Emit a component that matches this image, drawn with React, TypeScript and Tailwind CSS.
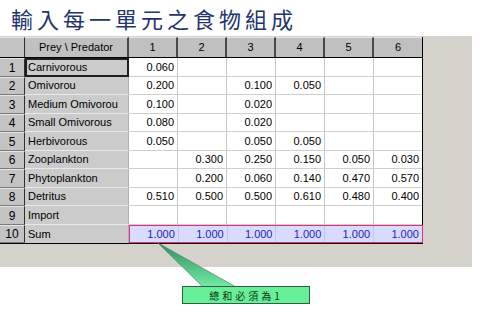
import React from "react";

const names = [
  "Carnivorous",
  "Omivorou",
  "Medium Omivorou",
  "Small Omivorous",
  "Herbivorous",
  "Zooplankton",
  "Phytoplankton",
  "Detritus",
  "Import",
];

const data: string[][] = [
  ["0.060", "", "", "", "", ""],
  ["0.200", "", "0.100", "0.050", "", ""],
  ["0.100", "", "0.020", "", "", ""],
  ["0.080", "", "0.020", "", "", ""],
  ["0.050", "", "0.050", "0.050", "", ""],
  ["", "0.300", "0.250", "0.150", "0.050", "0.030"],
  ["", "0.200", "0.060", "0.140", "0.470", "0.570"],
  ["0.510", "0.500", "0.500", "0.610", "0.480", "0.400"],
  ["", "", "", "", "", ""],
];

const font = { fontFamily: '"Liberation Sans", Arial, sans-serif' };

function RowNum({ n, h }: { n: number; h: string }) {
  return (
    <div
      className={`${h} w-[25px] shrink-0 flex items-center justify-center bg-[#c3c3c3] border-t border-t-[#e6e6e6] border-b border-b-[#7a7a7a] border-r border-r-[#303030] text-[12px] text-black`}
    >
      {n}
    </div>
  );
}

export default function App() {
  return (
    <div className="relative w-[480px] h-[320px] bg-white overflow-hidden" style={font}>
      <div
        className="h-[36px] pl-[11px] pt-[5px] text-[22px] leading-[27px] tracking-[4px] text-[#24356c]"
        style={{ fontFamily: '"Noto Sans CJK TC", "Noto Sans CJK SC", sans-serif', fontWeight: 400 }}
      >
        輸入每一單元之食物組成
      </div>
      <div className="w-[472px] h-[231px] bg-[#d5d2cc] pt-[1px]">
        <div className="w-[423px] border-r border-r-black border-b border-b-black bg-white">
          {/* header */}
          <div className="flex h-[21px] border-b border-b-black bg-[#c0c0c0] text-[11px] text-black">
            <div className="w-[25px] shrink-0 bg-[#c3c3c3] border-r border-r-[#303030] border-t border-t-[#e6e6e6]" />
            <div className="w-[104px] shrink-0 flex items-center justify-center border-r-2 border-r-[#484848] border-t border-t-[#e6e6e6]">
              Prey \ Predator
            </div>
            {[1, 2, 3, 4, 5, 6].map((c) => (
              <div
                key={c}
                className={`${c === 6 ? "w-[48px]" : "w-[49px]"} shrink-0 flex items-center justify-center border-t border-t-[#e6e6e6] ${c === 6 ? "" : "border-r-2 border-r-[#484848]"}`}
              >
                {c}
              </div>
            ))}
          </div>
          {/* body rows */}
          {names.map((name, i) => {
            const h = i % 2 === 0 ? "h-[19px]" : "h-[18px]";
            return (
              <div key={name} className={`flex ${h}`}>
                <RowNum n={i + 1} h={h} />
                <div
                  className={`w-[104px] shrink-0 flex items-center text-[11px] text-black bg-[#cbcbcb] ${
                    i === 0
                      ? "border-2 border-[#1e1e1e] pl-[1px]"
                      : "border-b border-b-[#e9e9e9] border-r border-r-[#b0b0b0] pl-[3px]"
                  }`}
                >
                  {name}
                </div>
                {data[i].map((v, j) => (
                  <div
                    key={j}
                    className={`${j === 5 ? "w-[48px]" : "w-[49px]"} shrink-0 flex items-center justify-end pr-[3px] text-[11px] text-black border-b border-b-[#cfcfcf] ${
                      j === 5 ? "" : "border-r border-r-[#c6c6c6]"
                    }`}
                  >
                    {v}
                  </div>
                ))}
              </div>
            );
          })}
          {/* sum row */}
          <div className="flex h-[18px]">
            <RowNum n={10} h="h-[18px]" />
            <div className="w-[104px] shrink-0 flex items-center pl-[3px] text-[11px] text-black bg-[#cbcbcb] border-r border-r-[#b0b0b0]">
              Sum
            </div>
            <div className="w-[294px] shrink-0 flex border border-[#e0307a] bg-[#dadafc]">
              {[0, 1, 2, 3, 4, 5].map((j) => (
                <div
                  key={j}
                  className={`flex-1 flex items-center justify-end pr-[3px] text-[11px] text-[#1c1cc4] ${
                    j === 5 ? "" : "border-r border-r-[#c4c4ec]"
                  }`}
                >
                  1.000
                </div>
              ))}
            </div>
          </div>
        </div>
      </div>

      {/* callout pointer */}
      <svg className="absolute left-0 top-0" width="480" height="320" viewBox="0 0 480 320">
        <defs>
          <linearGradient id="cg" x1="0" y1="0" x2="0" y2="1">
            <stop offset="0" stopColor="#2f8f5f" />
            <stop offset="1" stopColor="#74eaa4" />
          </linearGradient>
        </defs>
        <polygon points="158,243 203,287 236,287" fill="url(#cg)" stroke="#3d7a55" strokeWidth="0.6" />
      </svg>
      <div
        className="absolute left-[182px] top-[286px] w-[128px] h-[18px] bg-[#66ee98] border border-[#2f5f3f] flex items-center justify-center text-[10px] tracking-[3px] text-[#123612]"
        style={{ fontFamily: '"Noto Sans CJK TC", sans-serif' }}
      >
        總和必須為1
      </div>
    </div>
  );
}
